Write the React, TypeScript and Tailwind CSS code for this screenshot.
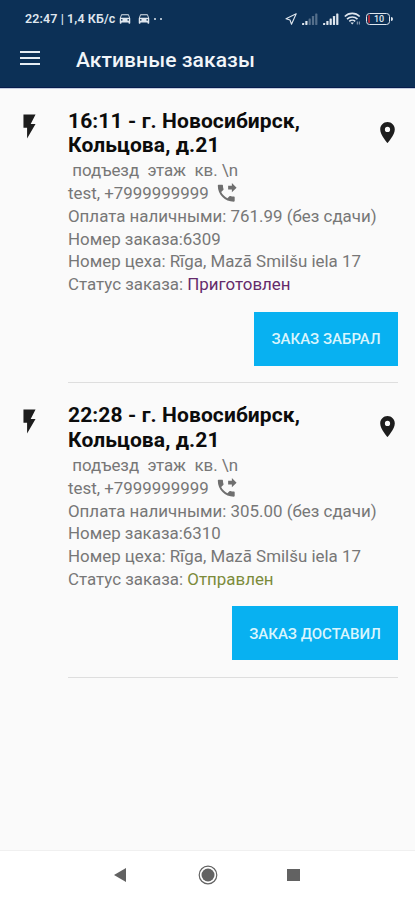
import React from "react";

const CAR =
  "M18.92 5.01C18.72 4.42 18.16 4 17.5 4h-11c-.66 0-1.21.42-1.42 1.01L3 11v8c0 .55.45 1 1 1h1c.55 0 1-.45 1-1v-1h12v1c0 .55.45 1 1 1h1c.55 0 1-.45 1-1v-8l-2.08-5.99zM6.5 15c-.83 0-1.5-.67-1.5-1.5S5.67 12 6.5 12s1.5.67 1.5 1.5S7.33 15 6.5 15zm11 0c-.83 0-1.5-.67-1.5-1.5s.67-1.5 1.5-1.5 1.5.67 1.5 1.5-.67 1.5-1.5 1.5zM5 10l1.500-4.500h11L19 10H5z";

function Icon({ d, className }: { d: string; className: string }) {
  return (
    <svg viewBox="0 0 24 24" fill="currentColor" className={className}>
      <path d={d} />
    </svg>
  );
}

function Signal({ lit }: { lit: number }) {
  return (
    <svg viewBox="0 0 16 12" fill="currentColor" className="h-3 w-4">
      {[2, 4, 6.5, 9, 11.5].map((h, i) => (
        <rect key={h} x={i * 3.3} y={12 - h} width="2.2" height={h} rx="0.4" opacity={i < lit ? 1 : 0.35} />
      ))}
    </svg>
  );
}

function StatusBar() {
  return (
    <div className="flex h-[37px] items-center pl-[25px] text-[#dfe6ee]">
      <span className="w-[91px] whitespace-nowrap text-[12.500px] font-semibold leading-4 tracking-[0.1px]">22:47 | 1,4 КБ/с</span>
      <Icon d={CAR} className="ml-[2px] h-[14px] w-[14px]" />
      <Icon d={CAR} className="ml-[5px] h-[14px] w-[14px]" />
      <span className="ml-[3px] flex gap-1">
        <i className="h-[2px] w-[2px] rounded-full bg-current" />
        <i className="h-[2px] w-[2px] rounded-full bg-current" />
      </span>
      <svg viewBox="0 0 12 12" fill="none" stroke="currentColor" strokeWidth="1.1" strokeLinejoin="round" className="ml-auto h-3 w-3">
        <path d="M11.200.8 1 5.700l4 1.300 1.500 4.200z" />
      </svg>
      <span className="ml-[5px]"><Signal lit={2} /></span>
      <span className="ml-[5px]"><Signal lit={5} /></span>
      <svg viewBox="0 0 17 13" fill="none" stroke="currentColor" strokeWidth="1.600" className="ml-[5px] h-[13px] w-[17px]">
        <path d="M.8 4.500a10.500 10.500 0 0 1 14.900 0M3 7.100a7.500 7.500 0 0 1 10.500 0M5.300 9.400a4.200 4.200 0 0 1 5.900 0" />
        <path d="M6.500 10.500 8.200 12.400 9.900 10.500z" fill="currentColor" stroke="none" />
        <path d="M13.300 9.500v3M15.300 9.500v3" strokeWidth=".9" opacity=".75" />
      </svg>
      <div className="ml-[5px] flex h-3 w-6 items-center rounded-[3.500px] border border-current pl-px">
        <i className="h-[8px] w-[2px] rounded-l-[1px] bg-[#a52a38]" />
        <span className="w-[18px] text-center text-[9px] font-medium leading-[10px]">10</span>
      </div>
      <i className="ml-px mr-[22px] h-1 w-[2px] rounded-r bg-current" />
    </div>
  );
}

interface Order {
  time: string;
  sum: string;
  id: string;
  status: string;
  statusClass: string;
  action: string;
  buttonClass: string;
}

const orders: Order[] = [
  { time: "16:11", sum: "761.99", id: "6309", status: "Приготовлен", statusClass: "text-[#652a6b]", action: "ЗАКАЗ ЗАБРАЛ", buttonClass: "w-36" },
  { time: "22:28", sum: "305.00", id: "6310", status: "Отправлен", statusClass: "text-[#7c8b3a]", action: "ЗАКАЗ ДОСТАВИЛ", buttonClass: "w-[166px]" },
];

function OrderCard({ order }: { order: Order }) {
  return (
    <article className="flex h-[294.900px] items-start pl-[15px] pr-[17px]">
      <Icon d="M7 2v11h3v9l7-12h-4l4-8z" className="mt-[24px] h-[29px] w-[29px] shrink-0 text-[#1d1d1d]" />
      <div className="ml-6 flex h-full flex-1 flex-col border-b border-[#dedede] pt-[20.600px]">
        <div className="flex justify-between">
          <h2 className="whitespace-nowrap text-[21px] font-bold leading-[24.500px] tracking-[0.1px] text-[#0c0c0c]">
            {order.time} - г. Новосибирск,
            <br />
            Кольцова, д.21
          </h2>
          <Icon d="M12 2C8.130 2 5 5.130 5 9c0 5.250 7 13 7 13s7-7.750 7-13c0-3.870-3.130-7-7-7zm0 9.500a2.500 2.500 0 0 1 0-5 2.500 2.500 0 0 1 0 5z" className="-mr-[2px] mt-[11px] h-[25px] w-[25px] text-[#1d1d1d]" />
        </div>
        <div className="mt-[1.800px] whitespace-pre text-[16.900px] leading-[22.700px] text-[#777777]">
          <p>{" подъезд  этаж  кв. \\n"}</p>
          <p className="flex">
            test, +7999999999
            <Icon
              d="M18 11l5-5-5-5v3h-4v4h4v3zm2 4.500c-1.250 0-2.450-.2-3.570-.57-.35-.11-.74-.03-1.020.24l-2.200 2.200c-2.830-1.440-5.150-3.750-6.590-6.590l2.200-2.210c.28-.26.36-.65.25-1C8.700 6.450 8.500 5.250 8.500 4c0-.55-.45-1-1-1H4c-.55 0-1 .45-1 1 0 9.390 7.610 17 17 17 .55 0 1-.45 1-1v-3.500c0-.55-.45-1-1-1z"
              className="ml-[6px] h-[22.500px] w-[22.500px] text-[#6f6f6f]"
            />
          </p>
          <p>Оплата наличными: {order.sum} (без сдачи)</p>
          <p>Номер заказа:{order.id}</p>
          <p>Номер цеха: Rīga, Mazā Smilšu iela 17</p>
          <p>
            Статус заказа: <span className={order.statusClass}>{order.status}</span>
          </p>
        </div>
        <button className={`mb-[16.350px] mt-auto h-[54px] self-end bg-[#08b1f1] pt-[2px] text-[15px] font-medium text-[#d9f5fd] ${order.buttonClass}`}>
          {order.action}
        </button>
      </div>
    </article>
  );
}

export default function App() {
  return (
    <div className="flex h-[900px] w-[415px] flex-col overflow-hidden bg-[#fafafa] font-['Roboto','Noto_Sans',sans-serif]">
      <header className="h-[88px] shrink-0 border-b border-[#071c4c] bg-[#0c3056]">
        <StatusBar />
        <div className="flex h-[46px] items-center pl-5">
          <div className="mb-[4px] flex w-5 flex-col gap-[4px]">
            <i className="h-[2px] bg-[#e6edf4]" />
            <i className="h-[2px] bg-[#e6edf4]" />
            <i className="h-[2px] bg-[#e6edf4]" />
          </div>
          <h1 className="ml-9 pt-[2px] text-[21px] font-medium tracking-[0.08px] text-[#f1f5f9]">Активные заказы</h1>
        </div>
      </header>
      <main className="flex-1 border-t border-[#c5cee0]">
        <div className="-mt-px">
          {orders.map((o) => (
            <OrderCard key={o.id} order={o} />
          ))}
        </div>
      </main>
      <nav className="flex h-[50px] shrink-0 items-center border-t border-[#f0f0f0] bg-white pb-[2px] pl-[114px] text-[#626262]">
        <svg viewBox="0 0 12 14" fill="currentColor" className="h-[14px] w-3"><path d="M12 0v14L0 7z" /></svg>
        <svg viewBox="0 0 20 20" className="ml-[72px] h-5 w-5">
          <circle cx="10" cy="10" r="8.800" fill="none" stroke="currentColor" strokeWidth="1.200" />
          <circle cx="10" cy="10" r="6.500" fill="currentColor" />
        </svg>
        <i className="ml-[69px] h-3 w-[13px] bg-current" />
      </nav>
    </div>
  );
}
